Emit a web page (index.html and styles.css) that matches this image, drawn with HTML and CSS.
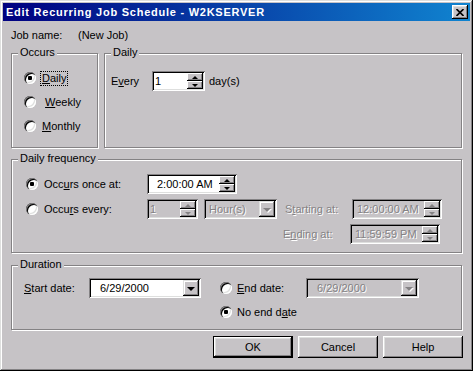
FILE: index.html
```html
<!DOCTYPE html>
<html>
<head>
<meta charset="utf-8">
<title>Edit Recurring Job Schedule</title>
<link rel="stylesheet" href="styles.css">
</head>
<body>
<div class="window">
  <div class="titlebar">
    <span class="title">Edit Recurring Job Schedule - W2KSERVER</span>
    <span class="close-btn"><svg width="8" height="7" viewBox="0 0 8 7"><path d="M0.5 0L7.5 7M7.5 0L0.5 7" stroke="#000" stroke-width="1.6"/></svg></span>
  </div>
  <div class="main">
    <div class="job-row"><span class="job-label">Job name:</span><span>(New Job)</span></div>

    <div class="top-row">
      <div class="group occurs">
        <span class="legend">Occurs</span>
        <div class="ropt"><span class="radio checked"></span><span class="focus"><u>D</u>aily</span></div>
        <div class="ropt"><span class="radio"></span><span>&nbsp;<u>W</u>eekly</span></div>
        <div class="ropt"><span class="radio"></span><span><u>M</u>onthly</span></div>
      </div>
      <div class="group daily">
        <span class="legend">Daily</span>
        <div class="row">
          <span class="lbl every">E<u>v</u>ery</span>
          <div class="field spin-day">
            <span class="val">1</span>
            <span class="spin-btns"><span class="up"></span><span class="down"></span></span>
          </div>
          <span class="lbl days">day(s)</span>
        </div>
      </div>
    </div>

    <div class="group freq">
      <span class="legend">Daily frequency</span>
      <div class="row">
        <div class="ropt wide"><span class="radio checked"></span><span>Occ<u>u</u>rs once at:</span></div>
        <div class="field time">
          <span class="val time-val">2:00:00 AM</span>
          <span class="spin-btns"><span class="up"></span><span class="down"></span></span>
        </div>
      </div>
      <div class="row">
        <div class="ropt wide"><span class="radio"></span><span>Occu<u>r</u>s every:</span></div>
        <div class="field spin-every off">
          <span class="val">1</span>
          <span class="spin-btns"><span class="up"></span><span class="down"></span></span>
        </div>
        <div class="field combo-hour off">
          <span class="val">Hour(s)</span>
          <span class="drop"></span>
        </div>
        <span class="lbl start-lbl off-text">S<u>t</u>arting at:</span>
        <div class="field time off">
          <span class="val">12:00:00 AM</span>
          <span class="spin-btns"><span class="up"></span><span class="down"></span></span>
        </div>
      </div>
      <div class="row end-row">
        <span class="lbl start-lbl off-text">E<u>n</u>ding at:</span>
        <div class="field time off">
          <span class="val">11:59:59 PM</span>
          <span class="spin-btns"><span class="up"></span><span class="down"></span></span>
        </div>
      </div>
    </div>

    <div class="group duration">
      <span class="legend">Duration</span>
      <div class="row">
        <span class="lbl date-lbl"><u>S</u>tart date:</span>
        <div class="field combo-date">
          <span class="val date-val">6/29/2000</span>
          <span class="drop"></span>
        </div>
        <div class="ropt end-opt"><span class="radio"></span><span><u>E</u>nd date:</span></div>
        <div class="field combo-end off">
          <span class="val date-val">6/29/2000</span>
          <span class="drop"></span>
        </div>
      </div>
      <div class="ropt no-end"><span class="radio checked"></span><span>No end d<u>a</u>te</span></div>
    </div>

    <div class="buttons">
      <span class="btn default">OK</span>
      <span class="btn">Cancel</span>
      <span class="btn">Help</span>
    </div>
  </div>
</div>
</body>
</html>
```
FILE: styles.css
```css
html,body{margin:0;padding:0;}
body{background:#c6c3c6;font:11px/13px "Liberation Sans",Arial,sans-serif;color:#000;}

.window{width:473px;height:371px;box-sizing:border-box;padding:3px;background:#c6c3c6;
	box-shadow:inset -1px -1px #000,inset 1px 1px #dedfde,inset -2px -2px #848284,inset 2px 2px #fff;}

.titlebar{height:18px;display:flex;align-items:center;justify-content:space-between;padding:0 2px 0 3px;
	background:linear-gradient(to right,#000080,#1084d0);}
.title{color:#fff;font-weight:bold;font-size:11px;letter-spacing:0.75px;}
.close-btn{width:16px;height:14px;box-sizing:border-box;display:flex;align-items:center;justify-content:center;background:#c6c3c6;
	box-shadow:inset -1px -1px #000,inset 1px 1px #fff,inset -2px -2px #848284,inset 2px 2px #dedfde;}

.main{padding:8px 8px 0 8px;}
.job-row{display:flex;height:13px;}
.job-label{width:67px;}

.top-row{display:flex;gap:6px;margin-top:11px;}

.group{position:relative;box-sizing:border-box;border:1px solid #848284;box-shadow:inset 1px 1px #fff,1px 1px #fff;}
.legend{position:absolute;top:-8px;left:6px;padding:0 2px;background:#c6c3c6;}

.occurs{width:87px;height:95px;padding:16px 0 0 12px;display:flex;flex-direction:column;gap:8px;}
.daily{flex:1;height:95px;padding:17px 0 0 6px;}
.freq{height:94px;margin-top:11px;padding:14px 0 0 14px;}
.duration{height:65px;margin-top:12px;padding:12px 0 0 12px;}

.row{display:flex;align-items:center;height:20px;}
.freq .row + .row{margin-top:5px;}

.ropt{display:flex;align-items:center;height:16px;gap:6px;}
.ropt.wide{width:121px;}
.focus{outline:1px dotted #000;outline-offset:0;padding:0 1px;margin-left:-1px;}

.radio{width:12px;height:12px;box-sizing:border-box;border-radius:50%;background:#fff;position:relative;flex:none;
	box-shadow:inset 1px 1px #848284,inset 2px 2px #000,inset -1px -1px #fff,inset -2px -2px #dedfde;}
.radio.checked::after{content:"";position:absolute;left:4px;top:4px;width:4px;height:4px;border-radius:1px;background:#000;}

.lbl{white-space:nowrap;}
.every{width:41px;}
.days{margin-left:4px;}

.field{height:20px;box-sizing:border-box;padding:2px;display:flex;background:#fff;flex:none;
	box-shadow:inset 1px 1px #848284,inset -1px -1px #fff,inset 2px 2px #000,inset -2px -2px #dedfde;}
.field .val{flex:1;display:flex;align-items:center;padding-left:1px;white-space:nowrap;}
.field.off{background:#c6c3c6;}
.field.off .val,.off-text{color:#848284;text-shadow:1px 1px #fff;}

.spin-day{width:53px;}
.spin-every{width:51px;margin-left:0;}
.combo-hour{width:73px;margin-left:6px;}
.combo-hour .val{padding-left:3px;}
.time{width:90px;}
.time .val{padding-left:3px;}
.time .time-val{padding-left:8px;}
.start-lbl{width:67px;margin-left:8px;}
.end-row .start-lbl{margin-left:257px;}

.spin-btns{width:16px;display:flex;flex-direction:column;}
.spin-btns span{flex:1;display:flex;align-items:center;justify-content:center;background:#c6c3c6;
	box-shadow:inset -1px -1px #000,inset 1px 1px #fff,inset -2px -2px #848284;}
.spin-btns .up::after{content:"";border-left:3px solid transparent;border-right:3px solid transparent;border-bottom:3px solid #000;}
.spin-btns .down::after{content:"";border-left:3px solid transparent;border-right:3px solid transparent;border-top:3px solid #000;}
.off .spin-btns .up::after{border-bottom-color:#848284;}
.off .spin-btns .down::after{border-top-color:#848284;}

.drop{width:16px;display:flex;align-items:center;justify-content:center;background:#c6c3c6;
	box-shadow:inset -1px -1px #000,inset 1px 1px #dedfde,inset -2px -2px #848284,inset 2px 2px #fff;}
.drop::after{content:"";border-left:4px solid transparent;border-right:4px solid transparent;border-top:4px solid #000;margin-top:1px;}
.off .drop::after{border-top-color:#848284;filter:drop-shadow(1px 1px 0 #fff);}

.date-lbl{width:65px;}
.combo-date{width:112px;}
.date-val{padding-left:9px !important;}
.end-opt{width:86px;margin-left:19px;gap:5px;}
.combo-end{width:113px;}
.no-end{margin:6px 0 0 196px;gap:5px;}

.buttons{display:flex;justify-content:flex-end;gap:5px;margin:6px -1px 0 0;}
.btn{width:80px;height:22px;box-sizing:border-box;display:flex;align-items:center;justify-content:center;
	box-shadow:inset -1px -1px #000,inset 1px 1px #fff,inset -2px -2px #848284,inset 2px 2px #dedfde;}
.btn.default{border:1px solid #000;}
```
